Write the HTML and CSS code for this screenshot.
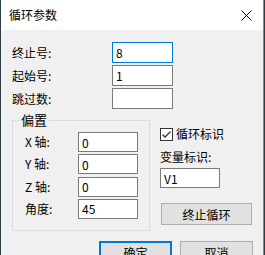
FILE: index.html
```html
<!DOCTYPE html>
<html lang="zh-CN">

<head>
	<meta charset="UTF-8">
	<title>循环参数</title>
	<link rel="stylesheet" href="styles.css">
</head>

<body>

	<div class="window">
		<div class="titlebar">
			<span class="title">循环参数</span>
			<svg class="close" width="11" height="11" viewBox="0 0 11 11">
				<path d="M0.5 0.5 L10.5 10.5 M10.5 0.5 L0.5 10.5" stroke="#000" stroke-width="1" fill="none" />
			</svg>
		</div>

		<div class="content">
			<div class="fields">
				<label>终止号:</label>
				<input type="text" class="focused" value="8">
				<label>起始号:</label>
				<input type="text" value="1">
				<label>跳过数:</label>
				<input type="text" value="">
			</div>

			<div class="middle">
				<fieldset class="group">
					<legend>偏置</legend>
					<div class="group-rows">
						<label>X 轴:</label>
						<input type="text" value="0">
						<label>Y 轴:</label>
						<input type="text" value="0">
						<label>Z 轴:</label>
						<input type="text" value="0">
						<label>角度:</label>
						<input type="text" value="45">
					</div>
				</fieldset>

				<div class="side">
					<div class="check-row">
						<svg class="checkbox" width="13" height="13" viewBox="0 0 13 13">
							<rect x="0.5" y="0.5" width="12" height="12" fill="#fff" stroke="#333" />
							<path d="M2.5 6.5 L5 9 L10.5 3.5" stroke="#333" stroke-width="1.3" fill="none" />
						</svg>
						<span>循环标识</span>
					</div>
					<label class="side-label">变量标识:</label>
					<input type="text" class="side-input" value="V1">
					<button class="btn stop">终止循环</button>
				</div>
			</div>

			<div class="actions">
				<button class="btn ok">确定</button>
				<button class="btn">取消</button>
			</div>
		</div>
	</div>

</body>

</html>
```

FILE: styles.css
```css
* {
	margin: 0;
	padding: 0;
	box-sizing: border-box;
}

body {
	width: 265px;
	height: 255px;
	overflow: hidden;
	background-color: #2e3d46;
	font-family: "Noto Sans CJK SC", "Microsoft YaHei", sans-serif;
	font-size: 12px;
	color: #000;
}

.window {
	margin-left: 1px;
	width: 263px;
	height: 255px;
	border-right: 1px solid #8a8a8a;
	background-color: #f0f0f0;
}

.titlebar {
	height: 30px;
	background-color: #fff;
	display: flex;
	align-items: center;
	justify-content: space-between;
	padding: 0 8px 0 8px;
}

.title {
	line-height: 14px;
}

.close {
	display: block;
	margin-right: 3px;
}

.content {
	padding: 12px 10px 0 11px;
}

label {
	line-height: 14px;
}

input {
	font-family: inherit;
	font-size: 12px;
	color: #000;
	background-color: #fff;
	border: 1px solid #7a7a7a;
	padding: 0 3px;
	outline: none;
}

.fields {
	display: grid;
	grid-template-columns: 100px 61px;
	grid-auto-rows: 21px;
	row-gap: 2px;
	align-items: center;
}

.fields input {
	height: 21px;
	width: 61px;
}

.fields input.focused {
	border-color: #0078d7;
}

.middle {
	display: flex;
	margin-top: 4px;
}

.group {
	width: 138px;
	border: 1px solid #dcdcdc;
	padding: 5px 0 11px 12px;
}

.group legend {
	margin-left: -6px;
	padding: 0 2px;
	line-height: 14px;
	font-size: 13px;
}

.group-rows {
	display: grid;
	grid-template-columns: 53px 60px;
	grid-template-rows: 20px 20px 20px 20px;
	row-gap: 2.33px;
	align-items: center;
}

.group-rows input {
	height: 20px;
	width: 60px;
}

.side {
	margin-left: 10px;
	display: flex;
	flex-direction: column;
	align-items: flex-start;
}

.check-row {
	margin-top: 14px;
	display: flex;
	align-items: center;
	gap: 3px;
	line-height: 14px;
}

.checkbox {
	display: block;
}

.side-label {
	margin-top: 9px;
}

.side-input {
	margin-top: 4px;
	width: 60px;
	height: 20px;
}

.btn {
	font-family: inherit;
	font-size: 12px;
	color: #000;
	background-color: #e1e1e1;
	border: 1px solid #adadad;
}

.stop {
	margin-top: 15px;
	margin-left: 1px;
	width: 91px;
	height: 22px;
}

.actions {
	margin-top: 10px;
	display: flex;
	justify-content: flex-end;
	gap: 8px;
}

.actions .btn {
	width: 73px;
	height: 23px;
}

.actions .ok {
	border: 2px solid #0078d7;
}
```
